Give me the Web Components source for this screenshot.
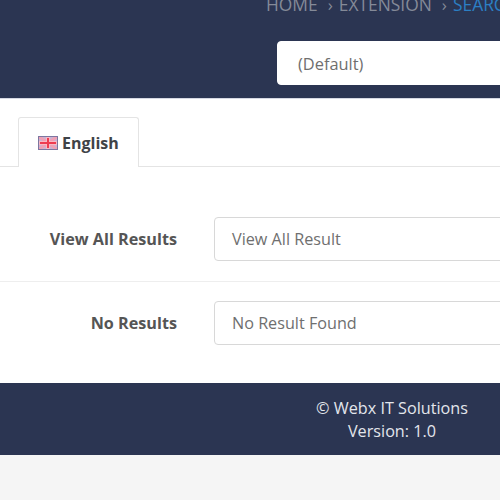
<!DOCTYPE html>
<html>
<head>
<meta charset="utf-8">
<style>
  html, body { margin: 0; padding: 0; height: 500px; overflow: hidden; background: #f5f5f5; }
  body { font-family: "Open Sans", "Liberation Sans", sans-serif; }
  #page { width: 784px; margin-top: -14px; }
</style>
</head>
<body>
<div id="page">
  <top-bar>
    <crumb-trail>
      <span>Home</span><span class="sep">›</span><span>Extension</span><span class="sep">›</span><span class="on">Search</span>
    </crumb-trail>
    <text-box slot="store" variant="store">(Default)</text-box>
  </top-bar>
  <main-panel>
    <lang-tab slot="tab">English</lang-tab>
    <field-row label="View All Results" divider>View All Result</field-row>
    <field-row label="No Results">No Result Found</field-row>
  </main-panel>
  <page-footer>
    <div>© Webx IT Solutions</div>
    <div>Version: 1.0</div>
  </page-footer>
</div>

<script>
class TopBar extends HTMLElement {
  constructor() {
    super();
    this.attachShadow({ mode: 'open' });
    this.shadowRoot.innerHTML = `
      <style>
        :host { display: block; height: 113px; box-sizing: border-box; background: #2b3552; padding-left: 266px; border-bottom: 1px solid #d5d8e2; }
        .store { margin-top: 18px; margin-left: 11px; }
      </style>
      <slot></slot>
      <div class="store"><slot name="store"></slot></div>
    `;
  }
}

class CrumbTrail extends HTMLElement {
  constructor() {
    super();
    this.attachShadow({ mode: 'open' });
    this.shadowRoot.innerHTML = `
      <style>
        :host { display: block; height: 37px; line-height: 37px; font-size: 17.4px; white-space: nowrap; color: #848a98; text-transform: uppercase; }
        ::slotted(.sep) { margin: 0 6px 0 10px; font-size: 17px; }
        ::slotted(.on) { color: #2b7fc4; }
      </style>
      <slot></slot>
    `;
  }
}

class TextBox extends HTMLElement {
  constructor() {
    super();
    this.attachShadow({ mode: 'open' });
    this.shadowRoot.innerHTML = `
      <style>
        :host { display: block; box-sizing: border-box; height: 44px; background: #fff; border: 1px solid #d8d8d8; border-radius: 4px; padding-left: 17px; font-size: 16.2px; line-height: 42px; color: #6f6f6f; }
        :host([variant="store"]) { border-color: #fff; padding-left: 20px; font-size: 16.4px; line-height: 44px; }
      </style>
      <slot></slot>
    `;
  }
}

class MainPanel extends HTMLElement {
  constructor() {
    super();
    this.attachShadow({ mode: 'open' });
    this.shadowRoot.innerHTML = `
      <style>
        :host { display: block; height: 284px; box-sizing: border-box; background: #fff; padding-top: 18px; }
        .tabs { padding-left: 18px; border-bottom: 1px solid #e4e4e4; display: flex; height: 49px; }
        .rows { padding-top: 50px; }
      </style>
      <div class="tabs"><slot name="tab"></slot></div>
      <div class="rows"><slot></slot></div>
    `;
  }
}

class LangTab extends HTMLElement {
  constructor() {
    super();
    this.attachShadow({ mode: 'open' });
    this.shadowRoot.innerHTML = `
      <style>
        :host { display: flex; align-items: center; gap: 4px; box-sizing: border-box; width: 121px; height: 50px; padding: 0 0 0 19px; background: #fff; border: 1px solid #e4e4e4; border-bottom: 0; border-radius: 3px 3px 0 0; font-size: 16px; font-weight: 700; color: #3f4347; }
        svg { display: block; margin-top: 1px; filter: blur(.4px); }
      </style>
      <svg width="20" height="14" viewBox="0 0 20 14">
        <rect width="20" height="14" fill="#c9b4d4"/>
        <path d="M0 0L20 14M20 0L0 14" stroke="#f0a0b4" stroke-width="3"/>
        <path d="M10 0V14M0 7H20" stroke="#f8b8c4" stroke-width="4"/>
        <path d="M10 2V12M2 7H18" stroke="#ee3b50" stroke-width="2"/>
        <rect x=".5" y=".5" width="19" height="13" fill="none" stroke="#7d76a0"/>
      </svg>
      <slot></slot>
    `;
  }
}

class FieldRow extends HTMLElement {
  constructor() {
    super();
    this.attachShadow({ mode: 'open' });
    this.shadowRoot.innerHTML = `
      <style>
        :host { display: grid; grid-template-columns: 177px 1fr; column-gap: 37px; align-items: center; height: 44px; padding-bottom: 20px; }
        :host([divider]) { border-bottom: 1px solid #eee; margin-bottom: 19px; }
        .label { text-align: right; font-size: 16.2px; font-weight: 700; color: #555; }
      </style>
      <div class="label"></div>
      <text-box><slot></slot></text-box>
    `;
    this.shadowRoot.querySelector('.label').textContent = this.getAttribute('label');
  }
}

class PageFooter extends HTMLElement {
  constructor() {
    super();
    this.attachShadow({ mode: 'open' });
    this.shadowRoot.innerHTML = `
      <style>
        :host { display: block; height: 72px; box-sizing: border-box; padding-top: 14px; background: #2b3552; color: #e3e6ec; text-align: center; font-size: 16.2px; line-height: 23px; }
      </style>
      <slot></slot>
    `;
  }
}

customElements.define('text-box', TextBox);
customElements.define('top-bar', TopBar);
customElements.define('crumb-trail', CrumbTrail);
customElements.define('main-panel', MainPanel);
customElements.define('lang-tab', LangTab);
customElements.define('field-row', FieldRow);
customElements.define('page-footer', PageFooter);
</script>
</body>
</html>
